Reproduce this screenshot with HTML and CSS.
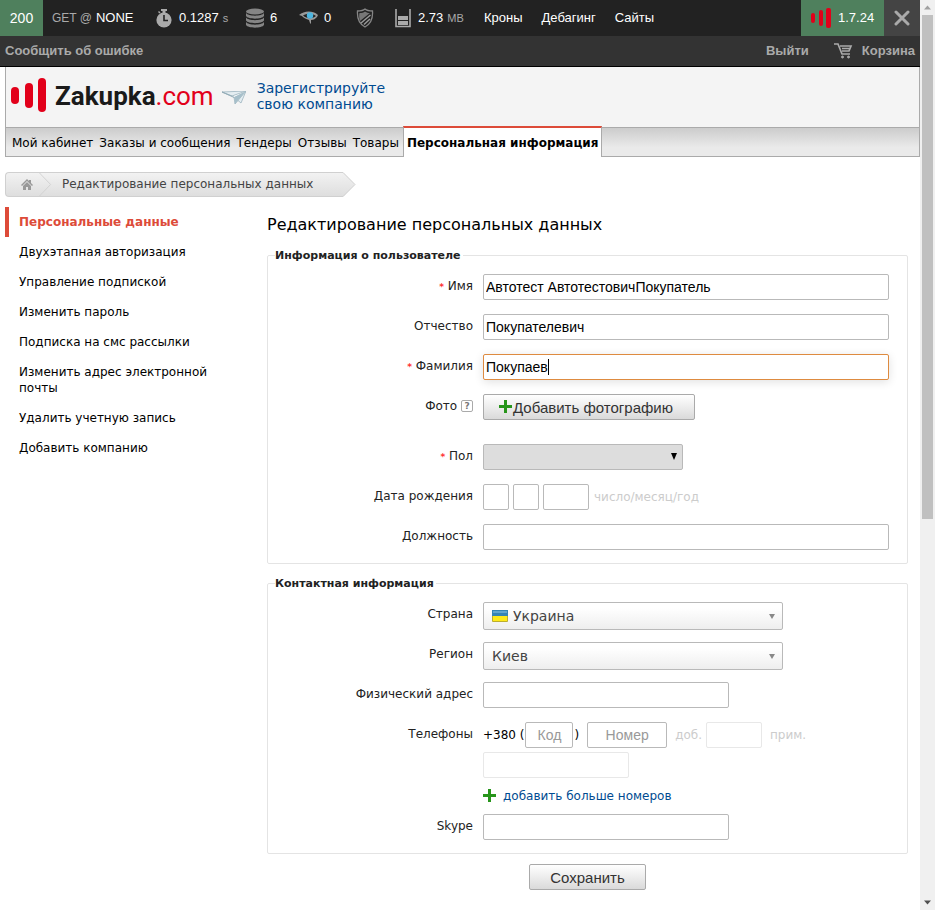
FILE: index.html
```html
<!DOCTYPE html>
<html lang="ru">
<head>
<meta charset="utf-8">
<title>Редактирование персональных данных</title>
<link rel="stylesheet" href="styles.css">
</head>
<body>
<div class="page">
  <div class="debug">
    <span class="status">200</span>
    <span class="item route">GET @ <b>NONE</b></span>
    <span class="item time"><svg width="16" height="20" viewBox="0 0 16 20"><path fill="#aaa" d="M5 1h6v2H9.500v2h-3V3H5zM2 4l1-1 1.500 1.500-1 1z"/><circle cx="8" cy="12" r="7.600" fill="#aaa"/><path d="M8 7v5.500h4" fill="none" stroke="#222" stroke-width="1.600"/></svg><b>0.1287</b> s</span>
    <span class="item db"><svg width="20" height="20" viewBox="0 0 20 20" fill="#858585"><ellipse cx="10" cy="3.500" rx="9" ry="3"/><path d="M1 5c2 3.500 16 3.500 18 0v3c-2 3.500-16 3.500-18 0zM1 9.500c2 3.500 16 3.500 18 0v3c-2 3.500-16 3.500-18 0zM1 14c2 3.500 16 3.500 18 0v3c-2 3.500-16 3.500-18 0z"/></svg><b>6</b></span>
    <span class="item eye"><svg width="20" height="16" viewBox="0 0 20 16"><path d="M0 5C5 1 13 0 19 5l-1 2c-2 2-3 3-6 3v4l-1-1-1-3C6 9 4 7 3 6z" fill="#999"/><path d="M4 5.500C8 3 13 3 17 6c-4 3-9 3-13-.5z" fill="#222"/><circle cx="11" cy="5.500" r="3.200" fill="#4db5e0"/></svg><b>0</b></span>
    <span class="item shield"><svg width="18" height="20" viewBox="0 0 18 20"><path d="M9 1c2 1.800 5 2 7.500 2C17 10 15 16 9 19 3 16 1 10 1.500 3 4 3 7 2.800 9 1z" fill="none" stroke="#858585" stroke-width="1.300"/><path d="M9 3.500c2 1.300 3 1.500 5 1.500L4 13C3 10 3 7 3.500 5 6 5 7.500 4.500 9 3.500z" fill="#777"/><path d="M14.500 7L5 15M14 11l-6 5.500" stroke="#999" stroke-width="1.500"/></svg></span>
    <span class="item mem"><svg width="16" height="19" viewBox="0 0 16 19"><path d="M1 0v17.500h14V0" fill="none" stroke="#aaa" stroke-width="1.600"/><path d="M3 7h10v4H3zM3 12h10v4H3z" fill="#aaa"/></svg><b>2.73</b> MB</span>
    <a class="item" href="#">Кроны</a><a class="item" href="#">Дебагинг</a><a class="item" href="#">Сайты</a>
    <span class="version"><svg width="21" height="20" viewBox="0 0 21 20" fill="#e2001a"><rect y="5" width="4" height="10" rx="2"/><rect x="8" y="2" width="4" height="16" rx="2"/><rect x="15" width="5" height="20" rx="2"/></svg>1.7.24</span>
    <button class="close" type="button" aria-label="Закрыть"><svg width="16" height="16" viewBox="0 0 16 16"><path d="M2 2l12 12M14 2L2 14" stroke="#aaa" stroke-width="3" stroke-linecap="round"/></svg></button>
  </div>
  <div class="userbar">
    <a href="#">Сообщить об ошибке</a>
    <a class="logout" href="#">Выйти</a>
    <a class="cart" href="#"><svg width="19" height="17" viewBox="0 0 19 17" fill="none" stroke="#aaa" stroke-width="1.700"><path d="M0 2h4l4 10h8M6 4h11l-2 5H8M8 6.500h8"/><circle cx="8.500" cy="15" r="1" fill="#aaa" stroke-width="1"/><circle cx="14.500" cy="15" r="1" fill="#aaa" stroke-width="1"/></svg>Корзина</a>
  </div>
  <main class="content">
    <header class="header">
      <a class="logo" href="#"><svg width="36" height="35" viewBox="0 0 36 35" fill="#e2001a"><rect y="9" width="8" height="17" rx="4"/><rect x="14" y="5" width="8" height="25" rx="4"/><rect x="27" y="0" width="8" height="34" rx="4"/></svg><span class="brand">Zakupka<span class="tld">.com</span></span></a>
      <svg class="plane" width="24" height="14" viewBox="0 0 24 14"><path d="M0 1l24-1-5 12-6-5z" fill="#e4edf1" stroke="#9cb4bf" stroke-width=".8"/><path d="M0 1l12 5 1 7L24 0 10 5z" fill="#fff" stroke="#8fa9b5" stroke-width=".7"/><path d="M12 6L24 0 13 13z" fill="#a6bfca"/></svg>
      <a class="register" href="#">Зарегистрируйте<br>свою компанию</a>
    </header>
    <nav class="tabs"><a href="#">Мой кабинет</a><a href="#">Заказы и сообщения</a><a href="#">Тендеры</a><a href="#">Отзывы</a><a href="#">Товары</a><a class="active" href="#">Персональная информация</a></nav>
    <nav class="crumbs">
      <a class="home" href="#" aria-label="Главная"><svg width="12" height="11" viewBox="0 0 12 11" fill="#999"><path d="M6 0l2 2V1h2v3l2 2-1 1-5-5-5 5-1-1z"/><path d="M2 7l4-4 4 4v4H7V8H5v3H2z"/></svg></a>
      <svg class="chevron" width="13" height="25" viewBox="0 0 13 25" fill="none"><path d="M0 0l12 12.500L0 25" stroke="#d0d0d0"/></svg>
      <span>Редактирование персональных данных</span>
      <svg class="tip" width="14" height="25" viewBox="0 0 14 25"><defs><linearGradient id="g" x2="0" y2="1"><stop stop-color="#f2f2f2"/><stop offset="1" stop-color="#dedede"/></linearGradient></defs><path d="M0 0h1l12 12.500L1 25H0z" fill="url(#g)"/><path d="M0 .5h1l12 12-12 12H0" fill="none" stroke="#d0d0d0"/></svg>
    </nav>
    <div class="columns">
      <nav class="side"><a class="active" href="#">Персональные данные</a><a href="#">Двухэтапная авторизация</a><a href="#">Управление подпиской</a><a href="#">Изменить пароль</a><a href="#">Подписка на смс рассылки</a><a href="#">Изменить адрес электронной почты</a><a href="#">Удалить учетную запись</a><a href="#">Добавить компанию</a></nav>
      <form class="form">
        <h1>Редактирование персональных данных</h1>
        <fieldset>
          <legend>Информация о пользователе</legend>
          <div class="row"><label for="name"><i>*</i> Имя</label><input id="name" value="Автотест АвтотестовичПокупатель"></div>
          <div class="row"><label for="mid">Отчество</label><input id="mid" value="Покупателевич"></div>
          <div class="row"><label for="last"><i>*</i> Фамилия</label><input id="last" class="focused" value="Покупаев"></div>
          <div class="row photo"><span class="label">Фото <button class="help" type="button">?</button></span><button class="btn add" type="button"><svg width="14" height="14" viewBox="0 0 14 14"><path d="M5 0h3v5h5v3H8v5H5V8H0V5h5z" fill="#27951b"/></svg>Добавить фотографию</button></div>
          <div class="row"><label for="sex"><i>*</i> Пол</label><span class="select gray"><select id="sex"><option></option></select><svg width="6" height="7" viewBox="0 0 6 7"><path d="M0 0h6L3 7z" fill="#000"/></svg></span></div>
          <div class="row"><label for="day">Дата рождения</label><span class="date"><input id="day"><input aria-label="Месяц"><input class="year" aria-label="Год"><span>число/месяц/год</span></span></div>
          <div class="row"><label for="job">Должность</label><input id="job"></div>
        </fieldset>
        <fieldset class="contacts">
          <legend>Контактная информация</legend>
          <div class="row tall"><label for="country">Страна</label><span class="select"><svg class="flag" width="16" height="12" viewBox="0 0 16 12"><rect width="16" height="12" rx="1" fill="#bcae2e"/><path d="M0 0h16v6H0z" fill="#3584b5"/><path d="M1 1h14v2H1z" fill="#62a6cf"/><path d="M1 6h14v5H1z" fill="#ffea1a"/></svg><select id="country" class="with-flag"><option>Украина</option></select><svg width="6" height="5" viewBox="0 0 6 5"><path d="M0 0h6L3 5z" fill="#888"/></svg></span></div>
          <div class="row tall"><label for="region">Регион</label><span class="select"><select id="region"><option>Киев</option></select><svg width="6" height="5" viewBox="0 0 6 5"><path d="M0 0h6L3 5z" fill="#888"/></svg></span></div>
          <div class="row"><label for="addr">Физический адрес</label><input id="addr" class="medium"></div>
          <div class="row phones"><label for="code">Телефоны</label><div class="phone"><span>+380 (</span><input id="code" class="code" placeholder="Код"><span class="paren">)</span><input class="number" placeholder="Номер" aria-label="Номер"><span class="pale">доб.</span><input class="ext" aria-label="доб."><span class="pale">прим.</span><input class="note" aria-label="прим."></div></div>
          <div class="row more"><span class="label"></span><a href="#"><svg width="14" height="14" viewBox="0 0 14 14"><path d="M5 0h3v5h5v3H8v5H5V8H0V5h5z" fill="#27951b"/></svg>добавить больше номеров</a></div>
          <div class="row"><label for="skype">Skype</label><input id="skype" class="medium"></div>
        </fieldset>
        <button class="btn save" type="button">Сохранить</button>
      </form>
    </div>
  </main>
</div>
<div class="scrollbar"><svg width="15" height="15" viewBox="0 0 15 15"><path d="M4 9.500h7l-3.500-4z" fill="#a0a0a0"/></svg><div class="thumb"></div><svg width="15" height="15" viewBox="0 0 15 15"><path d="M4 5.500h7l-3.500 4z" fill="#505050"/></svg></div>
</body>
</html>
```
FILE: styles.css
```css
* { box-sizing: border-box; }
body { margin: 0; display: flex; min-height: 100vh; background: #fff; font: 12px/16px "DejaVu Sans", sans-serif; color: #000; }
a { color: inherit; text-decoration: none; }
svg { flex: none; }
button, input, select { font-family: "Liberation Sans", sans-serif; margin: 0; }
.page { flex: 1; min-width: 0; }

.debug { display: flex; height: 36px; background: #222; color: #aaa; font: 13px/36px "Liberation Sans", sans-serif; white-space: nowrap; }
.debug b, .debug a { color: #fff; font-weight: normal; }
.debug > a { padding-right: 19px; }
.status { width: 43px; background: #4f805d; color: #fff; text-align: center; font-size: 14px; }
.item { display: flex; align-items: center; gap: 4px; font-size: 13px; }
.route { padding-left: 9px; width: 113px; font-size: 12px; }
.route b { font-size: 13px; }
.time, .db, .eye, .mem { font-size: 11px; }
.item b { font-size: 13px; }
.time svg, .mem svg { margin-right: 3px; }
.time { width: 89px; }
.db { width: 54px; }
.db svg, .eye svg { margin-right: 1px; }
.eye { width: 57px; }
.shield { width: 39px; }
.mem { width: 89px; }
.version { display: flex; align-items: center; gap: 6px; width: 83px; margin-left: auto; padding-left: 10px; background: #4f805d; color: #fff; }
.close { width: 36px; padding: 0; border: 0; background: #444; display: flex; align-items: center; justify-content: center; }
.userbar { display: flex; height: 31px; padding: 0 5px; border-bottom: 1px solid #000; background: #333; color: #aaa; font: bold 13px/29px "Liberation Sans", sans-serif; }
.logout { margin-left: auto; }
.cart { display: flex; align-items: center; height: 29px; gap: 9px; margin-left: 25px; }

.content { padding-left: 5px; }
.header { display: flex; height: 60px; padding-left: 5px; background: #f4f4f4; border: solid #aaa; border-width: 0 1px; }
.logo { display: flex; padding-top: 11px; gap: 8px; }
.brand { font: bold 26px/36px Roboto, sans-serif; color: #1a1a1a; }
.tld { font-weight: normal; color: #e2001a; }
.plane { margin: 24px 11px 0 8px; }
.register { padding-top: 13px; font-size: 14px; color: #004b91; }
.tabs { display: flex; height: 30px; border: 1px solid #aaa; background: linear-gradient(#ccc, #eaeaea 70%); padding-left: 3px; line-height: 31px; white-space: nowrap; }
.tabs a { padding: 0 3px; }
.tabs .active { margin: -2px 0 -1px 1px; padding: 0 3px; background: #fff; border: solid #aaa; border-width: 0 1px; border-top: 2px solid #dd4b39; font-weight: bold; }
.crumbs { display: flex; margin-top: 15px; height: 25px; line-height: 23px; color: #444; }
.home, .crumbs span { border: solid #d0d0d0; border-width: 1px 0; background: linear-gradient(#f2f2f2, #dedede); }
.home { display: flex; align-items: center; width: 34px; padding-left: 15px; border-left-width: 1px; border-radius: 4px 0 0 4px; }
.chevron { background: linear-gradient(#f2f2f2, #dedede); border: solid #d0d0d0; border-width: 1px 0; }
.crumbs span { padding: 0 29px 0 10px; }

.columns { display: grid; grid-template-columns: 212px minmax(0, 1fr); column-gap: 50px; padding: 10px 12px 0 0; }
.side a { display: block; padding: 7px 4px 7px 14px; }
.side .active { padding-left: 10px; border-left: 4px solid #dd4b39; color: #dd4b39; font-weight: bold; }
h1 { margin: 8px 0 14px; font-size: 16px; line-height: 20px; font-weight: normal; }
fieldset { min-width: 0; margin: 0; padding: 12px 18px 13px 7px; border: 1px solid #e4e4e4; border-radius: 2px; }
legend { padding: 0 2px 0 0; font-size: 11px; line-height: 13px; font-weight: bold; color: #222; }
.contacts { margin-top: 13px; }
.row { display: grid; grid-template-columns: 198px minmax(0, 1fr); column-gap: 10px; margin-bottom: 14px; color: #222; }
.row:last-child { margin-bottom: 0; }
.row label, .label { text-align: right; padding-top: 4px; }
.row i { color: #f33; font-size: 9px; font-weight: bold; font-style: normal; }
input { width: 100%; height: 26px; padding: 0 2px; border: 1px solid #b9b9b9; border-radius: 2px; background: #fff; font-size: 14px; color: #000; outline: none; }
.focused { border-color: #de8b40; box-shadow: 0 2px 10px rgba(0,0,0,.12); background: #fff linear-gradient(#000, #000) 64px 4px / 1px 16px no-repeat; }
.photo { margin-bottom: 24px; }
.help { width: 12px; height: 12px; padding: 0; border: 1px solid #aaa; border-radius: 2px; background: #fff; color: #777; font: bold 9px/10px "DejaVu Sans", sans-serif; vertical-align: 1px; }
.btn { display: flex; align-items: center; justify-content: center; height: 26px; padding: 0; border: 1px solid #aaa; border-radius: 2px; background: linear-gradient(#fff, #dadada); font-size: 15px; color: #333; }
.add { width: 212px; justify-content: flex-start; padding-left: 15px; }
.select { position: relative; display: block; width: 300px; height: 28px; }
.select select { appearance: none; display: block; width: 100%; height: 100%; padding: 0 20px 0 8px; border: 1px solid #b9b9b9; border-radius: 2px; background: linear-gradient(#fff 20%, #eee); font: 14px "DejaVu Sans", sans-serif; color: #444; }
.select svg { position: absolute; right: 8px; top: 12px; }
.select .flag { left: 9px; top: 8px; }
.select .with-flag { padding-left: 29px; }
.select.gray { width: 200px; height: 26px; }
.gray select { background: #ddd; }
.gray svg { right: 6px; top: 9px; }
.date { display: flex; gap: 4px; }
.date input { width: 26px; }
.date .year { width: 46px; }
.date span { padding: 5px 0 0 1px; color: #ccc; }
.tall { margin-bottom: 12px; }
.medium { width: 246px; }
.phones { margin-bottom: 6px; }
.phone { display: flex; flex-wrap: wrap; row-gap: 4px; line-height: 26px; color: #000; }
.phone input { text-align: center; }
.phone input::placeholder { color: #999; }
.phone .code { width: 48px; margin-left: 1px; }
.phone .number { width: 80px; margin: 0 8px 0 7px; }
.paren { padding: 0 1px; }
.pale { color: #ccc; }
.phone .ext { width: 56px; margin: 0 8px 0 4px; border-color: #e8e8e8; }
.phone .note { width: 146px; border-color: #e8e8e8; }
.more { margin-bottom: 6px; }
.more a { display: flex; align-items: center; gap: 6px; height: 24px; color: #004b91; }
.save { width: 117px; margin: 10px 0 0 262px; }

.scrollbar { width: 15px; display: flex; flex-direction: column; background: #f0f0f0; }
.thumb { width: 11px; height: 504px; margin: 0 2px auto; background: #c0c0c0; }
```
